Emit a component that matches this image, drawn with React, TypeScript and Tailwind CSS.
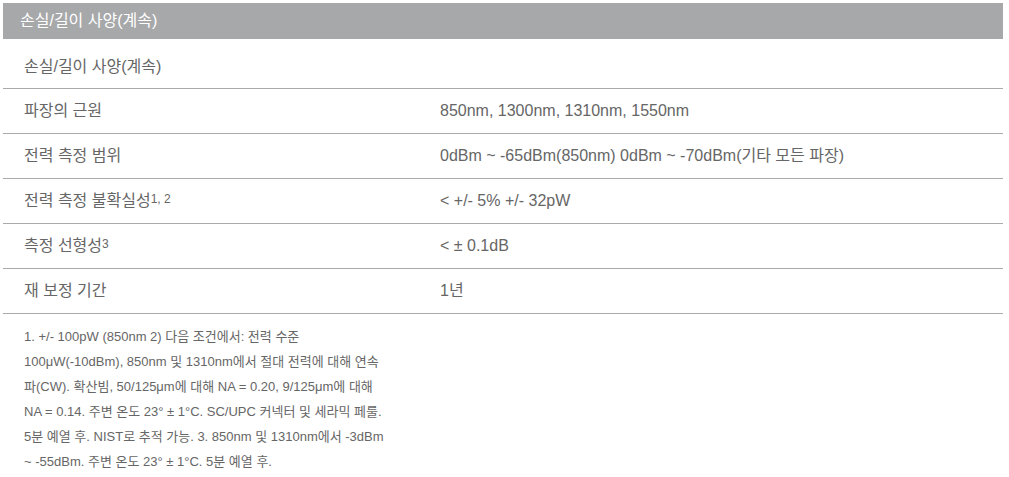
import React from 'react';

const font = { fontFamily: '"Liberation Sans", Arial, "Noto Sans CJK KR", sans-serif' };

const rows: { label: React.ReactNode; value: string }[] = [
  { label: '파장의 근원', value: '850nm, 1300nm, 1310nm, 1550nm' },
  { label: '전력 측정 범위', value: '0dBm ~ -65dBm(850nm) 0dBm ~ -70dBm(기타 모든 파장)' },
  {
    label: (
      <>
        전력 측정 불확실성<sup className="text-[12px] relative -top-[3px]">1, 2</sup>
      </>
    ),
    value: '< +/- 5% +/- 32pW',
  },
  {
    label: (
      <>
        측정 선형성<sup className="text-[12px] relative -top-[3px]">3</sup>
      </>
    ),
    value: '< ± 0.1dB',
  },
  { label: '재 보정 기간', value: '1년' },
];

// footnote lines, broken where the original wraps
const notes = [
  '1. +/- 100pW (850nm 2) 다음 조건에서: 전력 수준',
  '100μW(-10dBm), 850nm 및 1310nm에서 절대 전력에 대해 연속',
  '파(CW). 확산빔, 50/125μm에 대해 NA = 0.20, 9/125μm에 대해',
  'NA = 0.14. 주변 온도 23° ± 1°C. SC/UPC 커넥터 및 세라믹 페룰.',
  '5분 예열 후. NIST로 추적 가능. 3. 850nm 및 1310nm에서 -3dBm',
  '~ -55dBm. 주변 온도 23° ± 1°C. 5분 예열 후.',
];

const App = () => {
  return (
    <div className="bg-white min-h-[477px] pt-[3px] pl-[3px]" style={font}>
      <div className="w-[1000px]">
        <div className="h-[36px] bg-[#a7a8aa] flex items-center px-[17px] text-[16px] text-white">
          손실/길이 사양(계속)
        </div>

        <div className="h-[50px] flex items-center pl-[21px] pt-[6px] text-[16px] text-[#666] border-b border-[#aaa]">
          손실/길이 사양(계속)
        </div>

        {rows.map((row, i) => (
          <div key={i} className="h-[45px] flex items-center text-[16px] text-[#666] border-b border-[#aaa]">
            <div className="w-[437px] pl-[21px]">{row.label}</div>
            <div className="flex-1">{row.value}</div>
          </div>
        ))}

        <div className="pl-[21px] pt-[10px] text-[13px] leading-[25px] text-[#666]">
          {notes.map((line, i) => (
            <div key={i}>{line}</div>
          ))}
        </div>
      </div>
    </div>
  );
};

export default App;
